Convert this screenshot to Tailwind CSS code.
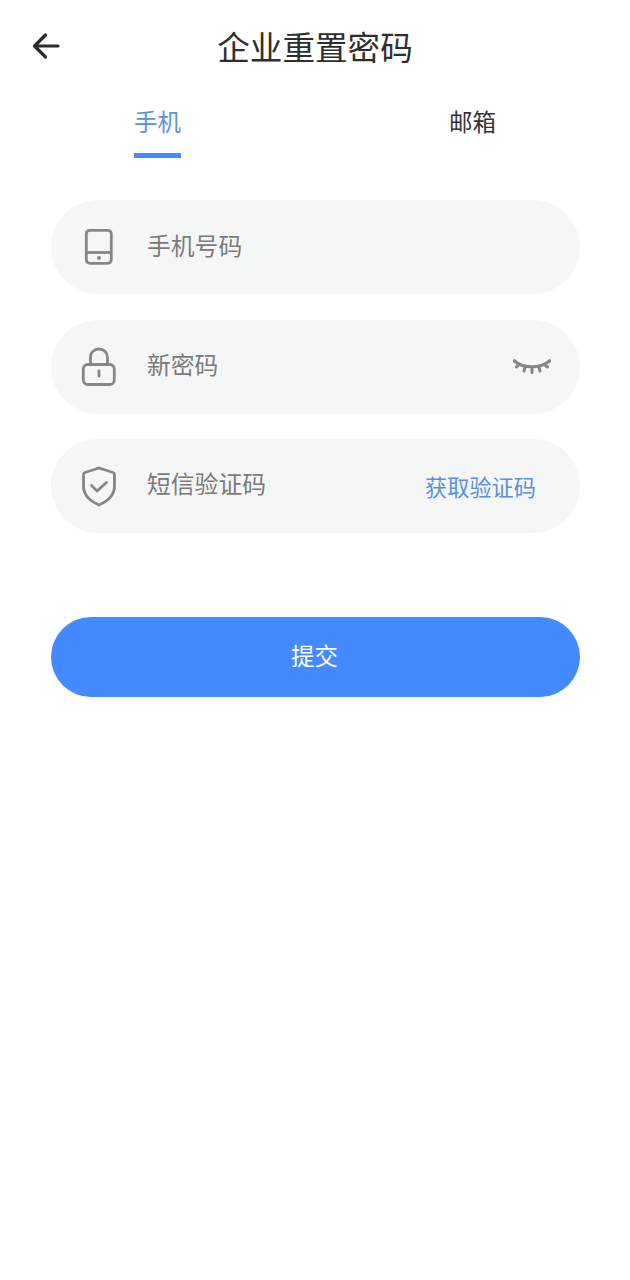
<!DOCTYPE html>
<html lang="zh-CN">
<head>
    <meta charset="UTF-8">
    <meta name="viewport" content="width=device-width, initial-scale=1.0">
    <title>企业重置密码</title>
    <script src="https://cdn.jsdelivr.net/npm/@tailwindcss/browser@4"></script>
</head>
<body class="bg-white">
  <div class="w-[630px] h-[1280px] overflow-hidden font-['Roboto','Noto_Sans_CJK_SC',sans-serif]">

    <!-- header -->
    <div class="relative h-[94px] flex items-center justify-center pt-[4px]">
      <svg class="absolute left-[30px] top-[30px] w-[32px] h-[32px]" viewBox="0 0 32 32" fill="none" stroke="#2b2b2b" stroke-width="3.2" stroke-linecap="round" stroke-linejoin="round">
        <path d="M28 16H5M15.500 5L4.500 16L15.500 27"/>
      </svg>
      <h1 class="text-[32.6px] leading-[40px] text-[#2e2e2e] font-normal">企业重置密码</h1>
    </div>

    <!-- tabs -->
    <div class="flex h-[64px] pl-[134px]">
      <div class="w-[47px] flex flex-col items-center justify-between">
        <span class="text-[23.5px] leading-[30px] mt-[14px] text-[#5b90dc]">手机</span>
        <span class="block w-[47px] h-[5px] bg-[#488af5]"></span>
      </div>
      <div class="ml-[268px]">
        <span class="block text-[23.5px] leading-[30px] mt-[14px] text-[#333333]">邮箱</span>
      </div>
    </div>

    <form class="px-[51px] pt-[42px]">
      <!-- phone -->
      <div class="h-[94px] w-[529px] rounded-[47px] bg-[#f5f7f7] flex items-center">
        <svg class="ml-[33px] w-[30px] h-[38px]" viewBox="0 0 30 38" fill="none" stroke="#868686" stroke-width="2.800" stroke-linejoin="round">
          <rect x="2.300" y="2.300" width="25" height="33" rx="3.500"/>
          <path d="M2.300 24.500H27.300"/>
          <circle cx="15" cy="30" r="2" fill="#868686" stroke="none"/>
        </svg>
        <span class="ml-[33px] mt-[1px] text-[23.8px] text-[#7a7a7a]">手机号码</span>
      </div>

      <!-- password -->
      <div class="mt-[26px] h-[94px] w-[529px] rounded-[47px] bg-[#f5f7f7] flex items-center">
        <svg class="ml-[30px] w-[36px] h-[40px]" viewBox="0 0 36 40" fill="none" stroke="#868686" stroke-width="2.800" stroke-linejoin="round">
          <rect x="2.300" y="17.500" width="31" height="20" rx="4.500"/>
          <path d="M9.500 17.500V10.500C9.500 5.500 13 2 17.800 2S26.500 5.500 26.500 10.500V17.500"/>
          <path d="M18 24V29" stroke-linecap="round"/>
        </svg>
        <span class="ml-[30px] text-[23.8px] text-[#7a7a7a]">新密码</span>
        <svg class="ml-auto mr-[29px] w-[38px] h-[18px]" viewBox="0 0 38 18" fill="none" stroke="#868686" stroke-width="3" stroke-linecap="round">
          <path d="M2 3.500C10 10.500 27 10.500 36 3.500"/>
          <path d="M2 3.500L1.500 2.500M5.500 7L3.500 9M12 9.500L11 13M19 10.500V14.500M26 9.500L27 13M32 7L34.500 9M36 3.500L36.500 2.500"/>
        </svg>
      </div>

      <!-- sms code -->
      <div class="mt-[25px] h-[94px] w-[529px] rounded-[47px] bg-[#f5f7f7] flex items-center">
        <svg class="ml-[30px] w-[36px] h-[42px]" viewBox="0 0 36 42" fill="none" stroke="#868686" stroke-width="2.800" stroke-linejoin="round" stroke-linecap="round">
          <path d="M18 3L32 7.500Q33.500 8 33.500 9.500V21C33.500 30 26 36.500 18 40C10 36.500 2.500 30 2.500 21V9.500Q2.500 8 4 7.500Z"/>
          <path d="M10.500 20.500L16 26L25.500 17.500"/>
        </svg>
        <span class="ml-[30px] text-[23.8px] text-[#7a7a7a]">短信验证码</span>
        <span class="ml-auto mr-[44px] text-[22.2px] mt-[6px] text-[#5b90dc]">获取验证码</span>
      </div>

      <!-- submit -->
      <button type="button" class="mt-[84px] block h-[80px] w-[529px] rounded-[40px] bg-[#448aff] text-white text-[23.5px] pt-[2px] pr-[2px]">提交</button>
    </form>
  </div>
</body>
</html>
